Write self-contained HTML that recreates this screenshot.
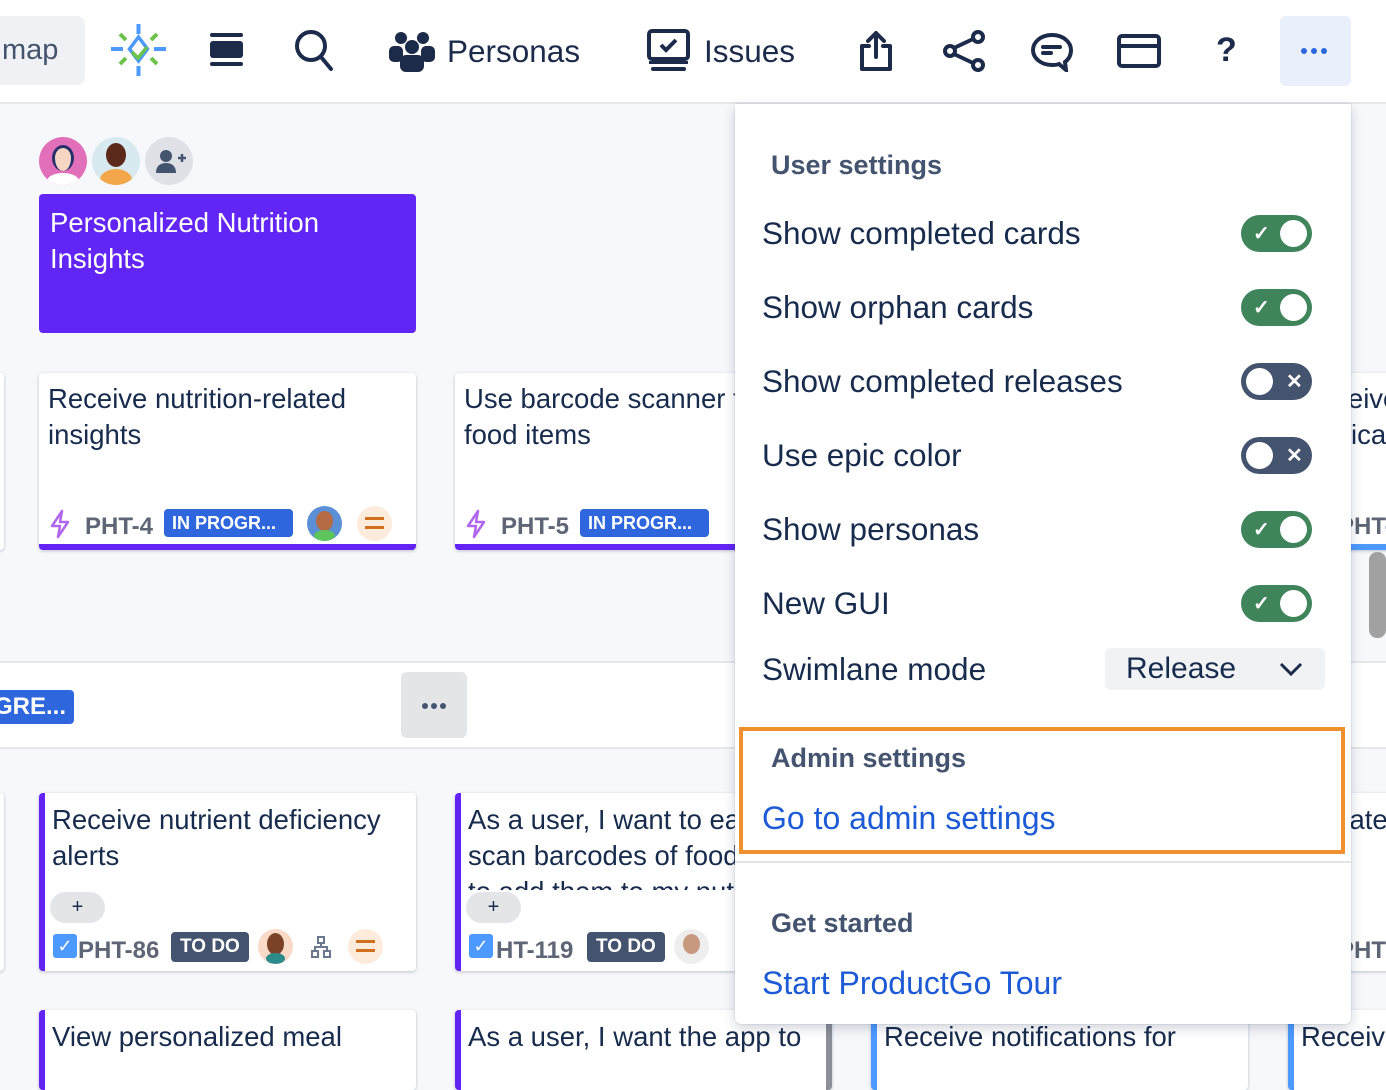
<!DOCTYPE html>
<html><head><meta charset="utf-8"><style>
*{box-sizing:border-box;margin:0;padding:0}
body{width:1386px;height:1064px;overflow:hidden;background:#f7f8fb;font-family:"Liberation Sans",sans-serif;position:relative;color:#172b4d}
.a{position:absolute}
.top{left:0;top:0;width:1386px;height:104px;background:#fff;border-bottom:2px solid #e6e7ea}
.card{position:absolute;background:#fff;border-radius:4px;box-shadow:0 1px 3px rgba(9,30,66,.25);font-size:27.5px;line-height:36px;color:#172b4d;overflow:hidden;white-space:nowrap}
.bb{border-bottom:6px solid #6323f5}
.bl{border-left:6px solid #6323f5}
.key{font-weight:bold;color:#5e6575;font-size:24px}
.badge{position:absolute;background:#2e67dd;color:#fff;font-weight:bold;font-size:18px;border-radius:4px;height:28px;line-height:28px;padding-left:8px}
.todo{position:absolute;background:#44546f;color:#fff;font-weight:bold;font-size:19px;border-radius:4px;height:30px;line-height:30px;padding:0 9px}
.av{position:absolute;border-radius:50%}
.panel{left:735px;top:104px;width:616px;height:920px;background:#fff;border-radius:0 0 6px 6px;box-shadow:0 4px 12px rgba(9,30,66,.2),0 0 1px rgba(9,30,66,.3)}
.item{position:absolute;left:27px;font-size:31.5px;color:#172b4d;white-space:nowrap}
.hd{position:absolute;left:36px;font-size:27px;font-weight:bold;color:#44546f}
.tg{position:absolute;left:506px;width:71px;height:37px;border-radius:19px}
.on{background:#3f845b}
.off{background:#44546f}
.tg .k{position:absolute;top:5px;width:27px;height:27px;border-radius:50%;background:#fff}
.on .k{left:39px}.off .k{left:5px}
.tg span{position:absolute;color:#fff;font-size:20px;font-weight:bold;top:6px}
.on span{left:12px}.off span{left:45px}
.link{position:absolute;left:27px;font-size:32px;color:#1d5bd6;white-space:nowrap}
</style></head><body>
<div class="a top"></div>
<div class="a" style="left:0;top:16px;width:85px;height:69px;background:#f0f1f4;border-radius:0 8px 8px 0;font-size:29px;color:#44546f;line-height:69px;padding-left:2px">map</div>
<svg class="a" style="left:110px;top:22px" width="58" height="56" viewBox="0 0 58 56">
<rect x="26.5" y="2" width="4" height="10" fill="#4c9aff"/><rect x="26.5" y="44" width="4" height="10" fill="#4c9aff"/>
<rect x="1" y="25" width="12" height="4" fill="#4c9aff"/><rect x="44" y="25" width="12" height="4" fill="#4c9aff"/>
<path d="M10 12l6 6M47 12l-6 6M10 42l6-6M47 42l-6-6" stroke="#6cc24a" stroke-width="4"/>
<path d="M28.5 15l-9 12 9 12 9-12z" fill="none" stroke="#4c9aff" stroke-width="3.5"/>
<path d="M22 30l6 6 9-11" fill="none" stroke="#6cc24a" stroke-width="3.5"/>
</svg>
<svg class="a" style="left:209px;top:32px" width="35" height="36" viewBox="0 0 35 36"><rect x="1" y="1" width="33" height="4" rx="2" fill="#1c2b4a"/><rect x="1" y="9" width="33" height="17" rx="3" fill="#1c2b4a"/><rect x="1" y="30" width="33" height="4" rx="2" fill="#1c2b4a"/></svg>
<svg class="a" style="left:293px;top:28px" width="42" height="44" viewBox="0 0 42 44"><circle cx="18" cy="18" r="14" fill="none" stroke="#1c2b4a" stroke-width="4"/><path d="M28 29l10 12" stroke="#1c2b4a" stroke-width="4" stroke-linecap="round"/></svg>
<svg class="a" style="left:388px;top:30px" width="48" height="42" viewBox="0 0 48 42"><g fill="#1c2b4a"><circle cx="13" cy="8" r="6"/><circle cx="35" cy="8" r="6"/><rect x="1" y="16" width="14" height="16" rx="5"/><rect x="33" y="16" width="14" height="16" rx="5"/><circle cx="24" cy="17" r="7"/><rect x="12" y="25" width="24" height="17" rx="6"/></g></svg>
<div class="a" style="left:447px;top:33px;font-size:31.5px;color:#1c2b4a">Personas</div>
<svg class="a" style="left:647px;top:29px" width="43" height="43" viewBox="0 0 43 43"><rect x="2" y="2" width="39" height="28" rx="3" fill="none" stroke="#1c2b4a" stroke-width="4"/><path d="M14 16l5 5 10-10" fill="none" stroke="#1c2b4a" stroke-width="4"/><rect x="2" y="32" width="39" height="3" fill="#1c2b4a"/><rect x="4" y="38" width="35" height="4" rx="2" fill="#1c2b4a"/></svg>
<div class="a" style="left:704px;top:33px;font-size:31.5px;color:#1c2b4a">Issues</div>
<svg class="a" style="left:858px;top:30px" width="36" height="42" viewBox="0 0 36 42"><path d="M11 16H4v23h28V16h-7M18 27V3M10 11l8-8 8 8" fill="none" stroke="#1c2b4a" stroke-width="4" stroke-linejoin="round" stroke-linecap="round"/></svg>
<svg class="a" style="left:942px;top:30px" width="44" height="42" viewBox="0 0 44 42"><g fill="none" stroke="#1c2b4a" stroke-width="4"><circle cx="8" cy="21" r="5"/><circle cx="36" cy="7" r="5"/><circle cx="36" cy="35" r="5"/><path d="M12 18l19-9M12 24l19 9"/></g></svg>
<svg class="a" style="left:1030px;top:32px" width="44" height="40" viewBox="0 0 44 40"><path d="M22 3C11 3 3 10 3 18s8 15 19 15c3 0 5 0 7-1l7 6-1-8c4-3 6-7 6-12C41 10 33 3 22 3z" fill="none" stroke="#1c2b4a" stroke-width="4"/><path d="M13 15h17M13 21h8" stroke="#1c2b4a" stroke-width="4" stroke-linecap="round"/></svg>
<svg class="a" style="left:1117px;top:34px" width="44" height="34" viewBox="0 0 44 34"><rect x="2" y="2" width="40" height="30" rx="3" fill="none" stroke="#1c2b4a" stroke-width="4"/><path d="M2 12h40" stroke="#1c2b4a" stroke-width="4"/></svg>
<div class="a" style="left:1216px;top:31px;font-size:34px;font-weight:bold;color:#1c2b4a">?</div>
<div class="a" style="left:1280px;top:16px;width:71px;height:70px;background:#e9f0fc;border-radius:6px"><div style="position:absolute;left:21px;top:32px;width:6px;height:6px;border-radius:50%;background:#2e67dd;box-shadow:10px 0 #2e67dd,20px 0 #2e67dd"></div></div>

<div class="av" style="left:39px;top:137px;width:48px;height:48px;background:#e26fb9;overflow:hidden"><div class="av" style="left:13px;top:8px;width:22px;height:26px;background:#f6d5c3;border:3px solid #25306b;border-bottom:none"></div><div class="av" style="left:8px;top:36px;width:32px;height:16px;background:#fff"></div></div>
<div class="av" style="left:92px;top:137px;width:48px;height:48px;background:#d8e9f0;overflow:hidden"><div class="av" style="left:14px;top:6px;width:20px;height:24px;background:#5c2a1a"></div><div class="av" style="left:8px;top:32px;width:32px;height:22px;background:#f3a64a"></div></div>
<div class="av" style="left:145px;top:137px;width:48px;height:48px;background:#dfe1e6"><svg width="48" height="48" viewBox="0 0 48 48"><circle cx="21" cy="19" r="6" fill="#44546f"/><path d="M11 36c0-7 4-10 10-10s10 3 10 10z" fill="#44546f"/><path d="M33 21h8M37 17v8" stroke="#44546f" stroke-width="2.5"/></svg></div>

<div class="a" style="left:39px;top:194px;width:377px;height:139px;background:#6125f5;border-radius:4px;color:#fff;font-size:27.5px;line-height:36px;padding:11px 11px">Personalized Nutrition<br>Insights</div>

<div class="card" style="left:-10px;top:373px;width:14px;height:177px"></div>
<div class="card" style="left:-10px;top:793px;width:14px;height:178px"></div>

<div class="card bb" style="left:39px;top:373px;width:377px;height:177px;padding:8px 9px">Receive nutrition-related<br>insights
<svg class="a" style="left:10px;top:136px" width="22" height="30" viewBox="0 0 22 30"><path d="M13 2L3 17h8l-2 11 10-15h-8z" fill="none" stroke="#b067f0" stroke-width="2.5" stroke-linejoin="round"/></svg>
<div class="a key" style="left:46px;top:136px">PHT-4</div>
<div class="badge" style="left:125px;top:136px;width:129px">IN PROGR...</div>
<div class="av" style="left:268px;top:133px;width:35px;height:35px;background:#5b8fd6;overflow:hidden"><div class="av" style="left:9px;top:5px;width:17px;height:20px;background:#b56b44"></div><div class="av" style="left:7px;top:24px;width:21px;height:11px;background:#5dc55b"></div></div>
<div class="av" style="left:318px;top:133px;width:35px;height:35px;background:#fdebdc"><div class="a" style="left:8px;top:11px;width:19px;height:3px;background:#d0701f"></div><div class="a" style="left:8px;top:20px;width:19px;height:3px;background:#d0701f"></div></div>
</div>
<div class="card bb" style="left:455px;top:373px;width:377px;height:177px;padding:8px 9px">Use barcode scanner to log<br>food items
<svg class="a" style="left:10px;top:136px" width="22" height="30" viewBox="0 0 22 30"><path d="M13 2L3 17h8l-2 11 10-15h-8z" fill="none" stroke="#b067f0" stroke-width="2.5" stroke-linejoin="round"/></svg>
<div class="a key" style="left:46px;top:136px">PHT-5</div>
<div class="badge" style="left:125px;top:136px;width:129px">IN PROGR...</div>
</div>
<div class="card" style="left:1290px;top:373px;width:120px;height:177px;border-bottom:6px solid #4c9aff;padding:8px 9px">Receive<br>notifica<div class="a key" style="left:48px;top:136px">PHT-</div></div>

<div class="a" style="left:0;top:661px;width:1386px;height:88px;background:#fff;border-top:2px solid #e6e7ea;border-bottom:2px solid #e6e7ea"></div>
<div class="a" style="left:-20px;top:690px;width:94px;height:34px;background:#2e67dd;border-radius:4px;color:#fff;font-weight:bold;font-size:24px;line-height:34px;padding-left:14px">GRE...</div>
<div class="a" style="left:401px;top:672px;width:66px;height:66px;background:#e4e5e7;border-radius:6px"><div style="position:absolute;left:21px;top:31px;width:6px;height:6px;border-radius:50%;background:#44546f;box-shadow:9px 0 #44546f,18px 0 #44546f"></div></div>

<div class="card bl" style="left:39px;top:793px;width:377px;height:178px;padding:9px 7px">Receive nutrient deficiency<br>alerts
<div class="a" style="left:5px;top:99px;width:55px;height:31px;background:#e4e5e7;border-radius:16px;text-align:center;line-height:31px;font-size:20px">+</div>
<div class="a" style="left:8px;top:141px;width:24px;height:24px;background:#4c9aff;border-radius:3px;color:#fff;font-size:18px;line-height:24px;text-align:center">✓</div>
<div class="a key" style="left:33px;top:140px">PHT-86</div>
<div class="todo" style="left:126px;top:139px">TO DO</div>
<div class="av" style="left:213px;top:136px;width:35px;height:35px;background:#fbd9c8;overflow:hidden"><div class="av" style="left:9px;top:4px;width:17px;height:22px;background:#7a4226"></div><div class="av" style="left:8px;top:24px;width:19px;height:11px;background:#2c8a8a"></div></div>
<svg class="a" style="left:264px;top:142px" width="24" height="24" viewBox="0 0 24 24"><g fill="none" stroke="#6b778c" stroke-width="2"><rect x="9" y="2" width="6" height="6"/><rect x="3" y="16" width="6" height="6"/><rect x="15" y="16" width="6" height="6"/><path d="M12 8v4M6 16v-4h12v4"/></g></svg>
<div class="av" style="left:303px;top:136px;width:35px;height:35px;background:#fdebdc"><div class="a" style="left:8px;top:11px;width:19px;height:3px;background:#d0701f"></div><div class="a" style="left:8px;top:20px;width:19px;height:3px;background:#d0701f"></div></div>
</div>
<div class="card bl" style="left:455px;top:793px;width:377px;height:178px;padding:9px 7px"><div style="height:88px;overflow:hidden">As a user, I want to easily<br>scan barcodes of food items<br>to add them to my nutrition</div>
<div class="a" style="left:5px;top:99px;width:55px;height:31px;background:#e4e5e7;border-radius:16px;text-align:center;line-height:31px;font-size:20px">+</div>
<div class="a" style="left:8px;top:141px;width:24px;height:24px;background:#4c9aff;border-radius:3px;color:#fff;font-size:18px;line-height:24px;text-align:center">✓</div>
<div class="a key" style="left:35px;top:140px">HT-119</div>
<div class="todo" style="left:126px;top:139px">TO DO</div>
<div class="av" style="left:213px;top:136px;width:35px;height:35px;background:#eee"><div class="av" style="left:9px;top:5px;width:17px;height:20px;background:#c79a80"></div></div>
</div>
<div class="card" style="left:1290px;top:793px;width:120px;height:178px;padding:9px 9px">Update<div class="a key" style="left:48px;top:140px">PHT</div></div>

<div class="card bl" style="left:39px;top:1010px;width:377px;height:80px;padding:9px 7px">View personalized meal</div>
<div class="card bl" style="left:455px;top:1010px;width:377px;height:80px;padding:9px 7px;border-right:6px solid #8c8f97">As a user, I want the app to</div>
<div class="card" style="left:871px;top:1010px;width:377px;height:80px;padding:9px 7px;border-left:6px solid #4c9aff">Receive notifications for</div>
<div class="card" style="left:1288px;top:1010px;width:120px;height:80px;padding:9px 7px;border-left:6px solid #4c9aff">Receive</div>

<div class="a" style="left:1369px;top:552px;width:17px;height:86px;background:#a1a1a1;border-radius:8px"></div>

<div class="a panel">
<div class="hd" style="top:46px">User settings</div>
<div class="item" style="top:111px">Show completed cards</div><div class="tg on" style="top:111px"><span>✓</span><div class="k"></div></div>
<div class="item" style="top:185px">Show orphan cards</div><div class="tg on" style="top:185px"><span>✓</span><div class="k"></div></div>
<div class="item" style="top:259px">Show completed releases</div><div class="tg off" style="top:259px"><span>✕</span><div class="k"></div></div>
<div class="item" style="top:333px">Use epic color</div><div class="tg off" style="top:333px"><span>✕</span><div class="k"></div></div>
<div class="item" style="top:407px">Show personas</div><div class="tg on" style="top:407px"><span>✓</span><div class="k"></div></div>
<div class="item" style="top:481px">New GUI</div><div class="tg on" style="top:481px"><span>✓</span><div class="k"></div></div>
<div class="item" style="top:547px">Swimlane mode</div>
<div class="a" style="left:370px;top:544px;width:220px;height:42px;background:#f1f2f4;border-radius:6px;font-size:30px;line-height:42px;padding-left:21px;color:#172b4d">Release
<svg class="a" style="left:174px;top:14px" width="24" height="14" viewBox="0 0 24 14"><path d="M2 2l10 10 10-10" fill="none" stroke="#1c2b4a" stroke-width="3"/></svg></div>
<div class="a" style="left:4px;top:623px;width:606px;height:127px;border:4px solid #f0912f"></div>
<div class="hd" style="top:639px">Admin settings</div>
<div class="link" style="top:696px">Go to admin settings</div>
<div class="a" style="left:0;top:757px;width:616px;height:2px;background:#e4e5e8"></div>
<div class="hd" style="top:804px">Get started</div>
<div class="link" style="top:861px">Start ProductGo Tour</div>
</div>
</body></html>
